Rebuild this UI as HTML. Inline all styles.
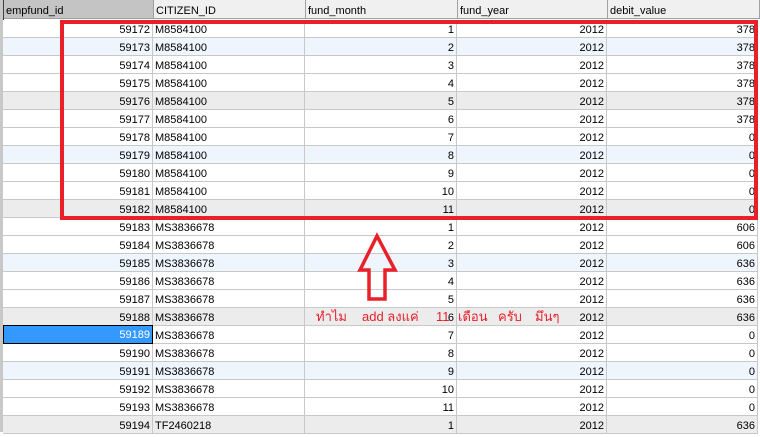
<!DOCTYPE html>
<html><head><meta charset="utf-8"><style>
body{margin:0;width:760px;height:432px;overflow:hidden;background:#fff;font-family:"Liberation Sans","DejaVu Sans",sans-serif;font-size:11px;color:#000;position:relative}
.h{position:absolute;top:0;height:19px;background:#f0f0f0;border-right:1px solid #a0a0a0;border-bottom:1px solid #a0a0a0;line-height:22px;padding-left:2px;box-sizing:border-box}
.r{position:absolute;left:3px;width:755px;height:18px;border-bottom:1px solid #c8c8c8;box-sizing:border-box}
.c{position:absolute;top:0;height:17px;line-height:21px;border-right:1px solid #c8c8c8;box-sizing:border-box;padding:0 2px;white-space:nowrap}
.n{text-align:right}
.t{position:absolute;top:308px;height:18px;line-height:18px;color:#e8202a;font-size:13px;font-family:'Liberation Sans','DejaVu Sans',sans-serif;white-space:nowrap}
</style></head><body>
<div style="position:absolute;left:0;top:0;width:3px;height:432px;background:#c8c8c8;border-right:1px solid #404040"></div>
<div class="h" style="left:4px;width:150px;background:#c4c4c4">empfund_id</div>
<div class="h" style="left:154px;width:152px">CITIZEN_ID</div>
<div class="h" style="left:306px;width:152px">fund_month</div>
<div class="h" style="left:458px;width:150px">fund_year</div>
<div class="h" style="left:608px;width:152px">debit_value</div>
<div id="rows"></div>
<script>
var data=[[59172,"M8584100",1,378],[59173,"M8584100",2,378],[59174,"M8584100",3,378],[59175,"M8584100",4,378],[59176,"M8584100",5,378],[59177,"M8584100",6,378],[59178,"M8584100",7,0],[59179,"M8584100",8,0],[59180,"M8584100",9,0],[59181,"M8584100",10,0],[59182,"M8584100",11,0],[59183,"MS3836678",1,606],[59184,"MS3836678",2,606],[59185,"MS3836678",3,636],[59186,"MS3836678",4,636],[59187,"MS3836678",5,636],[59188,"MS3836678",6,636],[59189,"MS3836678",7,0],[59190,"MS3836678",8,0],[59191,"MS3836678",9,0],[59192,"MS3836678",10,0],[59193,"MS3836678",11,0],[59194,"TF2460218",1,636]];
var h="";
data.forEach(function(d,i){var m=i%6,bg=m==1?"#eef5fd":m==4?"#ececec":"#fff";
var sel=d[0]==59189;
h+='<div class="r" style="top:'+(20+18*i)+'px;background:'+bg+'">'+
'<div class="c n" style="left:0;width:150px;'+(sel?'background:#3399ff;color:#fff;border:1px solid #000;height:19px;line-height:19px;top:-1px':'')+'">'+d[0]+'</div>'+
'<div class="c" style="left:150px;width:152px">'+d[1]+'</div>'+
'<div class="c n" style="left:302px;width:152px">'+d[2]+'</div>'+
'<div class="c n" style="left:454px;width:150px">2012</div>'+
'<div class="c n" style="left:604px;width:151px">'+d[3]+'</div></div>';});
document.getElementById("rows").innerHTML=h;
</script>
<div style="position:absolute;left:60px;top:20px;width:698px;height:200px;border:4px solid #e8202a;box-sizing:border-box"></div>
<svg style="position:absolute;left:0;top:0" width="760" height="432"><polygon points="377,236 395,270 385,270 385,299 369,299 369,270 360,270" fill="none" stroke="#e8202a" stroke-width="3.5" stroke-linejoin="miter"/></svg>
<span class="t" style="left:316px">ทำไม</span>
<span class="t" style="left:362px">add ลงแค่</span>
<span class="t" style="left:436px">11</span>
<span class="t" style="left:458px">เดือน</span>
<span class="t" style="left:498px">ครับ</span>
<span class="t" style="left:535px">มึนๆ</span>
</body></html>
